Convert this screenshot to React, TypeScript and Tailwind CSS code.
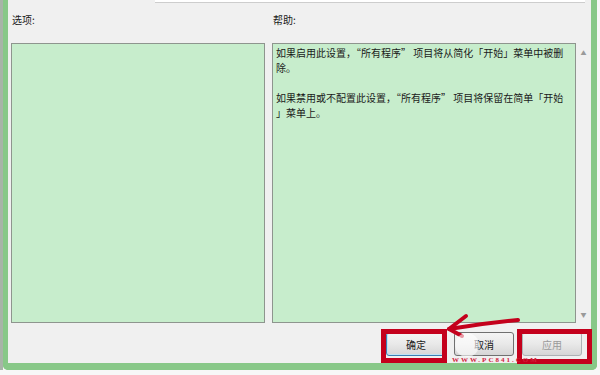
const cjk = { fontFamily: '"Noto Sans CJK SC", "Noto Sans", sans-serif' };

function WinButton({
  label,
  primary,
  disabled,
}: {
  label: string;
  primary?: boolean;
  disabled?: boolean;
}) {
  const border = primary
    ? "border-[#3c7fb1] shadow-[inset_0_0_0_1px_#bfe3f5]"
    : disabled
    ? "border-[#adb2b5]"
    : "border-[#707070]";
  const text = disabled ? "text-[#9a9a9a]" : "text-[#1a1a1a]";
  return (
    <div
      className={`w-[60px] h-[24px] rounded-[3px] border ${border} ${text} bg-gradient-to-b from-[#f4f4f4] via-[#e9e9e9] to-[#d6d6d6] flex items-center justify-center text-[10px]`}
    >
      {label}
    </div>
  );
}

export default function App() {
  return (
    <div
      className="relative w-[600px] h-[375px] bg-[#f7f7f7] flex overflow-hidden text-[#1a1a1a]"
      style={cjk}
    >
      {/* outer edge to the left of the frame */}
      <div className="w-[3px] h-[370px] bg-[#a8b4a8]" />

      {/* dialog window */}
      <div className="w-[594px] h-[370px] border-l-[5px] border-r-[6px] border-b-[7px] border-[#88c888] rounded-b-[5px] bg-[#f0f0f0] flex flex-col">
        {/* bottom edge of the field above */}
        <div className="h-[3px] flex">
          <div className="ml-[147px] w-[430px] bg-white border-b border-[#cdcdcd]" />
        </div>

        {/* labels */}
        <div className="h-[40px] pt-[10px] pl-[4px] flex text-[10px] leading-[14px]">
          <div className="w-[261px]">选项:</div>
          <div>帮助:</div>
        </div>

        {/* panels */}
        <div className="h-[280px] pl-[3px] flex">
          <div className="w-[254px] h-full bg-[#c7edcc] border border-[#8e958e]" />
          <div className="ml-[7px] w-[304px] h-full bg-[#c7edcc] border border-[#8e958e] pl-[3px] pt-[1px] text-[10px] leading-[15px] whitespace-pre">
            <div>如果启用此设置，“所有程序” 项目将从简化「开始」菜单中被删</div>
            <div>除。</div>
            <div> </div>
            <div>如果禁用或不配置此设置，“所有程序” 项目将保留在简单「开始</div>
            <div>」菜单上。</div>
          </div>
          <div className="w-[15px] h-full flex flex-col items-center justify-between pt-[7px] pb-[5px] text-[6px] text-[#9a9a9a] leading-none">
            <span>▲</span>
            <span>▼</span>
          </div>
        </div>

        {/* buttons */}
        <div className="pt-[9px] pr-[9px] flex justify-end gap-[8px]">
          <WinButton label="确定" primary />
          <WinButton label="取消" />
          <WinButton label="应用" disabled />
        </div>
      </div>

      {/* red annotations */}
      <div className="absolute left-[381px] top-[329px] w-[66px] h-[34px] border-[5px] border-[#c4001c]" />
      <div className="absolute left-[517px] top-[329px] w-[75px] h-[35px] border-[5px] border-[#c4001c]" />
      <svg className="absolute left-[440px] top-[310px]" width="90" height="35" viewBox="0 0 90 35">
        <path d="M78 10 Q45 13 9 19" stroke="#c4001c" strokeWidth="4" fill="none" strokeLinecap="round" />
        <path d="M26 6 L9 19 L22 26" stroke="#c4001c" strokeWidth="4" fill="none" strokeLinecap="round" strokeLinejoin="round" />
      </svg>

      {/* watermark */}
      <div className="absolute left-[455px] top-[333px] w-[24px] h-[24px] rounded-full bg-white/60" />
      <div
        className="absolute left-[452px] top-[356px] text-[7px] leading-[8px] font-bold tracking-[2px] text-[#d0203a]"
        style={{ fontFamily: '"Liberation Serif", serif' }}
      >
        WWW.PC841.COM
      </div>
    </div>
  );
}
